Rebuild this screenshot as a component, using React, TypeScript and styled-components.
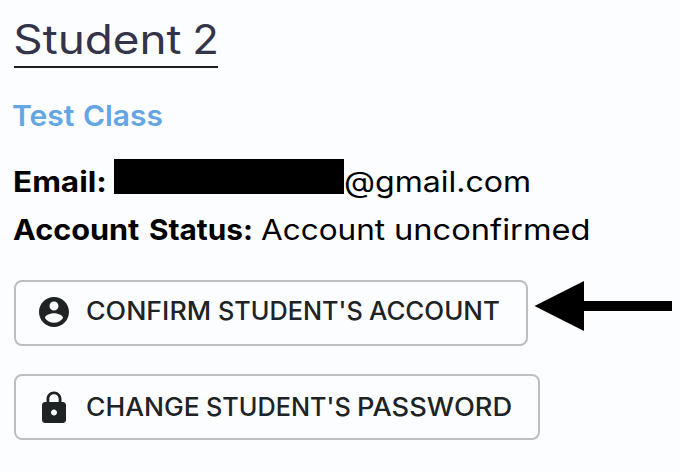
import React from "react";
import styled, { createGlobalStyle } from "styled-components";

const GlobalStyle = createGlobalStyle`
  * { box-sizing: border-box; }
  body {
    margin: 0;
    background: #fcfdff;
    font-family: "Inter", "Liberation Sans", sans-serif;
    color: #000;
  }
`;

const Page = styled.main`
  display: flex;
  flex-direction: column;
  align-items: flex-start;
  height: 472px;
  padding: 14px 8px 0 14px;
  overflow: hidden;
`;

/* A word set slightly wider than the font's natural proportions. */
const Word = styled.span<{ $advance: number; $stretch: number }>`
  display: inline-block;
  flex: none;
  width: ${(p) => p.$advance}px;
  text-align: left;
  white-space: nowrap;
  transform-origin: left center;
  transform: scaleX(${(p) => p.$stretch});
`;

const Title = styled.h1`
  display: flex;
  width: 204px;
  height: 54px;
  margin: 0;
  border-bottom: 2px solid #1d1d22;
  color: #33334a;
  font-size: 40.4px;
  font-weight: 400;
  line-height: 51px;
  text-indent: -0.7px;
`;

const ClassName = styled.a`
  display: flex;
  margin: 28px 0 0 -2px;
  color: #64a6e4;
  font-size: 28.9px;
  font-weight: 600;
  line-height: 40px;
`;

const Details = styled.section`
  margin-top: 22px;
`;

const Detail = styled.div`
  display: flex;
  align-items: center;
  height: 48px;
  margin-left: -1px;
  font-size: 28.9px;
  font-weight: 400;
  line-height: 48px;
`;

const Label = styled.strong`
  display: flex;
  font-weight: 700;
`;

const Redaction = styled.span`
  width: 230px;
  height: 35px;
  margin-bottom: 11px;
  background: #000;
`;

const Actions = styled.div`
  display: flex;
  flex-direction: column;
  align-items: flex-start;
  gap: 28px;
  margin-top: 26px;
`;

const ActionRow = styled.div`
  display: flex;
  align-items: flex-start;
`;

const Button = styled.button<{ $width: number; $top?: number; $bottom?: number }>`
  display: flex;
  align-items: center;
  width: ${(p) => p.$width}px;
  height: 66px;
  padding: ${(p) => p.$top ?? 0}px 0 ${(p) => p.$bottom ?? 0}px 20px;
  border: 2px solid #bebec0;
  border-radius: 8px;
  background: transparent;
  color: #202323;
  font: 500 25px/32px "Inter", "Liberation Sans", sans-serif;

  svg {
    flex: none;
    width: 36px;
    height: 36px;
    margin-right: 13.5px;
    fill: currentColor;
  }
`;

const Caption = styled.span`
  display: flex;
  margin-bottom: 2px;
`;

const Arrow = styled.svg`
  width: 138px;
  height: 50px;
  margin: 1px 0 0 6px;
`;

export default function App() {
  return (
    <>
      <GlobalStyle />
      <Page>
        <Title>
          <Word $advance={179} $stretch={1.135}>Student</Word>
          <Word $advance={25} $stretch={1.08}>2</Word>
        </Title>
        <ClassName>
          <Word $advance={70.5} $stretch={1.04}>Test</Word>
          <Word $advance={80} $stretch={1.035}>Class</Word>
        </ClassName>
        <Details>
          <Detail>
            <Label><Word $advance={100.5} $stretch={1.09}>Email:</Word></Label>
            <Redaction />
            <Word $advance={187} $stretch={1.11}>@gmail.com</Word>
          </Detail>
          <Detail>
            <Label>
              <Word $advance={136} $stretch={1.06}>Account</Word>
              <Word $advance={112} $stretch={1.03}>Status:</Word>
            </Label>
            <Word $advance={132.5} $stretch={1.09}>Account</Word>
            <Word $advance={196} $stretch={1.13}>unconfirmed</Word>
          </Detail>
        </Details>
        <Actions>
          <ActionRow>
            <Button $width={514} $bottom={2}>
              <svg viewBox="0 0 24 24">
                <path d="M12 2C6.480 2 2 6.480 2 12s4.480 10 10 10 10-4.480 10-10S17.520 2 12 2zm0 3c1.660 0 3 1.340 3 3s-1.340 3-3 3-3-1.340-3-3 1.340-3 3-3zm0 14.200c-2.500 0-4.710-1.280-6-3.220.030-1.990 4-3.080 6-3.080 1.990 0 5.970 1.090 6 3.080-1.290 1.940-3.500 3.220-6 3.220z" />
              </svg>
              <Caption>
                <Word $advance={132} $stretch={1.07}>CONFIRM</Word>
                <Word $advance={151} $stretch={1.01}>STUDENT'S</Word>
                <Word $advance={130} $stretch={1.035}>ACCOUNT</Word>
              </Caption>
            </Button>
            <Arrow viewBox="0 0 138 50">
              <path d="M0.500 25 50 0V20H138V30H50V50Z" />
            </Arrow>
          </ActionRow>
          <Button $width={526} $top={2}>
            <svg viewBox="0 0 24 24">
              <path d="M18 8h-1V6c0-2.760-2.240-5-5-5S7 3.240 7 6v2H6c-1.100 0-2 .9-2 2v10c0 1.100.9 2 2 2h12c1.100 0 2-.9 2-2V10c0-1.100-.9-2-2-2zm-6 9c-1.100 0-2-.9-2-2s.9-2 2-2 2 .9 2 2-.9 2-2 2zm3.100-9H8.900V6c0-1.710 1.390-3.100 3.100-3.100 1.710 0 3.100 1.390 3.100 3.100v2z" />
            </svg>
            <Caption>
              <Word $advance={120} $stretch={1.06}>CHANGE</Word>
              <Word $advance={151} $stretch={1.01}>STUDENT'S</Word>
              <Word $advance={154} $stretch={1.09}>PASSWORD</Word>
            </Caption>
          </Button>
        </Actions>
      </Page>
    </>
  );
}
